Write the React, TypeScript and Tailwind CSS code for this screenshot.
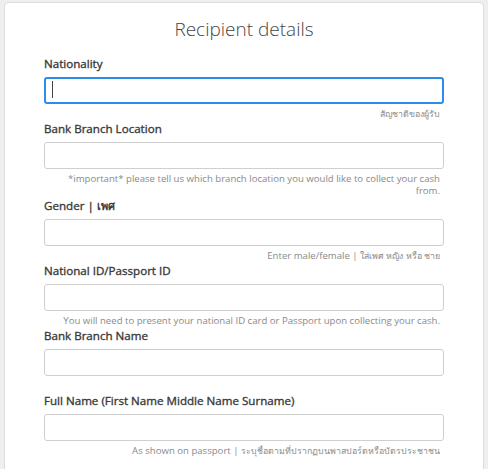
import React from "react";

interface Field {
  id: string;
  label: React.ReactNode;
  help?: React.ReactNode;
  focused?: boolean;
}

// Thai glyphs fall back to a wider face, so they get a slightly smaller size
const Th = ({ children }: { children: React.ReactNode }) => (
  <span className="text-[8.8px]">{children}</span>
);

const fields: Field[] = [
  { id: "nationality", label: "Nationality", help: <Th>สัญชาติของผู้รับ</Th>, focused: true },
  {
    id: "branch-location",
    label: "Bank Branch Location",
    help: (
      <>
        *important* please tell us which branch location you would like to collect your cash
        <br />
        from.
      </>
    ),
  },
  {
    id: "gender",
    label: (
      <>
        Gender | <span className="font-bold text-[11px] [-webkit-text-stroke:0px]">เพศ</span>
      </>
    ),
    help: (
      <>
        Enter male/female | <Th>ใส่เพศ หญิง หรือ ชาย</Th>
      </>
    ),
  },
  {
    id: "national-id",
    label: "National ID/Passport ID",
    help: "You will need to present your national ID card or Passport upon collecting your cash.",
  },
  { id: "branch-name", label: "Bank Branch Name" },
  {
    id: "full-name",
    label: "Full Name (First Name Middle Name Surname)",
    help: (
      <>
        As shown on passport | <Th>ระบุชื่อตามที่ปรากฏบนพาสปอร์ตหรือบัตรประชาชน</Th>
      </>
    ),
  },
];

function FormField({ field }: { field: Field }) {
  return (
    <div className="flex flex-col">
      <label
        htmlFor={field.id}
        className="text-[11.6px] leading-[17px] font-normal text-[#3a3a3a] [-webkit-text-stroke:0.35px_#3a3a3a] mb-[5px]"
      >
        {field.label}
      </label>
      <div className="relative">
        <input
          id={field.id}
          type="text"
          className={
            field.focused
              ? "block w-full h-[27px] rounded-[3px] border-2 border-[#2b8de9] bg-white px-2 outline-none"
              : "block w-full h-[27px] rounded-[3px] border border-[#cfcfcf] bg-white px-2 outline-none"
          }
        />
        {field.focused && (
          <span className="absolute left-[8px] top-[4px] h-[17px] w-px bg-[#444]" />
        )}
      </div>
      <div className="mt-[4px] min-h-[12px] pr-[4px] text-right text-[9.6px] leading-[12px] text-[#8a8a8a]">
        {field.help}
      </div>
    </div>
  );
}

export default function App() {
  return (
    <div
      className="min-h-screen bg-[#efefef] px-[4px] pt-[2px]"
      style={{ fontFamily: '"Open Sans", "Noto Sans", "DejaVu Sans", sans-serif' }}
    >
      <div className="rounded-[4px] border border-[#dcdcdc] bg-white px-[39px] pt-[12px] pb-10">
        <h1 className="text-center text-[19px] leading-[28px] font-light text-[#444] mb-[12px]">
          Recipient details
        </h1>
        <form className="flex flex-col">
          {fields.map((f) => (
            <FormField key={f.id} field={f} />
          ))}
        </form>
      </div>
    </div>
  );
}
